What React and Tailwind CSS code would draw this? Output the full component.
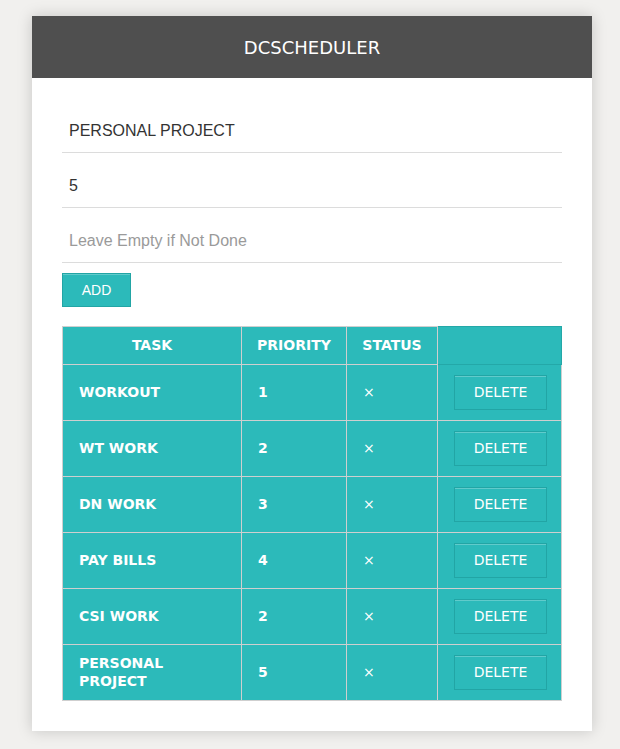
import { useState } from "react";

const initialTasks = [
  { name: "WORKOUT", priority: 1 },
  { name: "WT WORK", priority: 2 },
  { name: "DN WORK", priority: 3 },
  { name: "PAY BILLS", priority: 4 },
  { name: "CSI WORK", priority: 2 },
  { name: "PERSONAL PROJECT", priority: 5 },
];

const App = () => {
  const [tasks, setTasks] = useState(initialTasks);
  const [name, setName] = useState("PERSONAL PROJECT");
  const [priority, setPriority] = useState("5");
  const [status, setStatus] = useState("");

  const addTask = () => {
    if (!name) return;
    setTasks([...tasks, { name: name.toUpperCase(), priority: Number(priority) || 0 }]);
  };

  const deleteTask = (i) => setTasks(tasks.filter((_, idx) => idx !== i));

  return (
    <div className="min-h-screen bg-[#f1f0ee] pt-4 font-['DejaVu_Sans',sans-serif]">
      <div className="ml-[32px] w-[560px] bg-white pb-[30px] shadow-[0_0_14px_rgba(0,0,0,0.18)]">
        <div className="flex h-[62px] items-center justify-center bg-[#4f4f4f] text-[18px] text-white">
          DCSCHEDULER
        </div>
        <div className="px-[30px] pt-[20px] font-['Liberation_Sans',Arial,sans-serif]">
          <input
            value={name}
            onChange={(e) => setName(e.target.value)}
            className="block h-[55px] w-full border-b border-[#dcdcdc] px-[7px] pt-[20px] pb-[8px] text-[16px] text-[#333] outline-none"
          />
          <input
            value={priority}
            onChange={(e) => setPriority(e.target.value)}
            className="block h-[55px] w-full border-b border-[#dcdcdc] px-[7px] pt-[20px] pb-[8px] text-[16px] text-[#333] outline-none"
          />
          <input
            value={status}
            onChange={(e) => setStatus(e.target.value)}
            placeholder="Leave Empty if Not Done"
            className="block h-[55px] w-full border-b border-[#dcdcdc] px-[7px] pt-[20px] pb-[8px] text-[16px] text-[#333] outline-none placeholder:text-[#9a9a9a]"
          />
          <button
            onClick={addTask}
            className="mt-[10px] h-[34px] w-[69px] border border-[#22a5a5] bg-[#2cbaba] text-[14px] text-white shadow-[inset_0_1px_0_rgba(255,255,255,0.25)]"
          >
            ADD
          </button>
          <table className="mt-[19px] w-[500px] table-fixed border-collapse bg-[#2cbaba] font-['DejaVu_Sans',sans-serif] text-[14px] text-white">
            <thead>
              <tr className="h-[38px]">
                <th className="w-[179px] border border-[#cfcfcf] font-bold">TASK</th>
                <th className="w-[105px] border border-[#cfcfcf] font-bold">PRIORITY</th>
                <th className="w-[91px] border border-[#cfcfcf] font-bold">STATUS</th>
                <th className="border border-[#24a8a8]"></th>
              </tr>
            </thead>
            <tbody>
              {tasks.map((t, i) => (
                <tr key={i} className="h-[56px]">
                  <td className="border border-[#cfcfcf] px-4 pb-px text-left font-bold leading-[18px]">
                    {t.name}
                  </td>
                  <td className="border border-[#cfcfcf] px-4 pb-px text-left font-bold">
                    {t.priority}
                  </td>
                  <td className="border border-[#cfcfcf] px-4 pb-px text-left">×</td>
                  <td className="border border-[#cfcfcf] px-4 text-left">
                    <button
                      onClick={() => deleteTask(i)}
                      className="h-[35px] w-[93px] border border-[#22a5a5] bg-[#2cbaba] text-[14px] text-white shadow-[inset_0_1px_0_rgba(255,255,255,0.25)]"
                    >
                      DELETE
                    </button>
                  </td>
                </tr>
              ))}
            </tbody>
          </table>
        </div>
      </div>
    </div>
  );
};

export default App;
